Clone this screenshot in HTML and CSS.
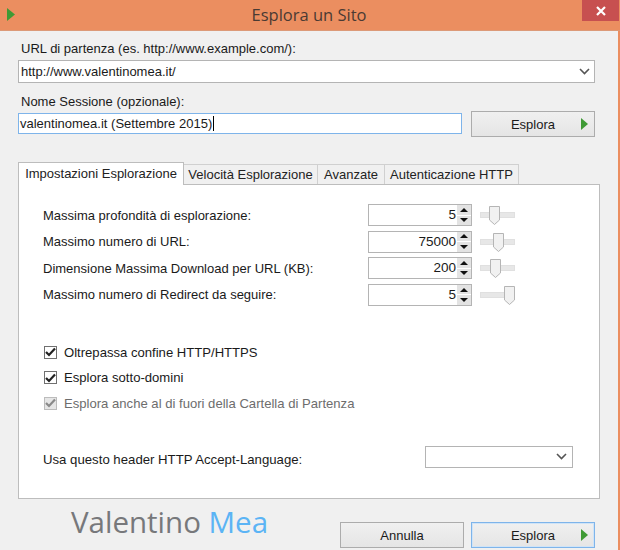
FILE: index.html
```html
<!DOCTYPE html>
<html lang="it">
<head>
    <meta charset="UTF-8">
    <meta name="viewport" content="width=device-width, initial-scale=1.0">
    <title>Esplora un Sito</title>
    <link rel="stylesheet" href="styles.css">
</head>
<body>

<div class="window">
    <header class="titlebar">
        <svg class="app-icon" width="8" height="13" viewBox="0 0 8 13"><path d="M0 0 L8 6.5 L0 13 Z" fill="#3f9a35"/></svg>
        <h1>Esplora un Sito</h1>
        <button class="close-btn">
            <svg width="10" height="10" viewBox="0 0 10 10"><path d="M1 1 L9 9 M9 1 L1 9" stroke="#fff" stroke-width="2.2"/></svg>
        </button>
    </header>

    <main class="client">
        <label class="field-label">URL di partenza (es. http://www.example.com/):</label>
        <div class="combo combo-url">
            <span>http://www.valentinomea.it/</span>
            <svg class="chevron" width="11" height="7" viewBox="0 0 11 7"><path d="M1 1 L5.5 5.5 L10 1" fill="none" stroke="#555" stroke-width="1.6"/></svg>
        </div>

        <label class="field-label session-label">Nome Sessione (opzionale):</label>
        <div class="session-row">
            <div class="text-input">valentinomea.it (Settembre 2015)<span class="caret"></span></div>
            <button class="btn">
                <span>Esplora</span>
                <svg class="btn-arrow" width="7" height="12" viewBox="0 0 7 12"><path d="M0 0 L7 6 L0 12 Z" fill="#3f9a35"/></svg>
            </button>
        </div>

        <div class="tabs">
            <div class="tab tab-active">Impostazioni Esplorazione</div>
            <div class="tab tab-speed">Velocità Esplorazione</div>
            <div class="tab tab-adv">Avanzate</div>
            <div class="tab tab-auth">Autenticazione HTTP</div>
        </div>

        <section class="panel">
            <div class="settings">
                <div class="setting-row">
                    <span>Massima profondità di esplorazione:</span>
                    <div class="spinner"><span class="spin-value">5</span><div class="spin-btns"><i class="up"></i><i class="down"></i></div></div>
                    <div class="slider"><svg class="thumb" style="left: 8px" width="11" height="19" viewBox="0 0 11 19"><path d="M.5.5 H10.5 V14 L5.5 18.5 L.5 14 Z" fill="#f1f1f1" stroke="#b5b5b5"/></svg></div>
                </div>
                <div class="setting-row">
                    <span>Massimo numero di URL:</span>
                    <div class="spinner"><span class="spin-value">75000</span><div class="spin-btns"><i class="up"></i><i class="down"></i></div></div>
                    <div class="slider"><svg class="thumb" style="left: 12px" width="11" height="19" viewBox="0 0 11 19"><path d="M.5.5 H10.5 V14 L5.5 18.5 L.5 14 Z" fill="#f1f1f1" stroke="#b5b5b5"/></svg></div>
                </div>
                <div class="setting-row">
                    <span>Dimensione Massima Download per URL (KB):</span>
                    <div class="spinner"><span class="spin-value">200</span><div class="spin-btns"><i class="up"></i><i class="down"></i></div></div>
                    <div class="slider"><svg class="thumb" style="left: 9px" width="11" height="19" viewBox="0 0 11 19"><path d="M.5.5 H10.5 V14 L5.5 18.5 L.5 14 Z" fill="#f1f1f1" stroke="#b5b5b5"/></svg></div>
                </div>
                <div class="setting-row">
                    <span>Massimo numero di Redirect da seguire:</span>
                    <div class="spinner"><span class="spin-value">5</span><div class="spin-btns"><i class="up"></i><i class="down"></i></div></div>
                    <div class="slider"><svg class="thumb" style="left: 23px" width="11" height="19" viewBox="0 0 11 19"><path d="M.5.5 H10.5 V14 L5.5 18.5 L.5 14 Z" fill="#f1f1f1" stroke="#b5b5b5"/></svg></div>
                </div>
            </div>

            <div class="checks">
                <div class="check">
                    <span class="check-box"><svg width="11" height="10" viewBox="0 0 11 10"><path d="M1 5 L4 8 L10 1.5" fill="none" stroke="#222" stroke-width="2.2"/></svg></span>
                    Oltrepassa confine HTTP/HTTPS
                </div>
                <div class="check">
                    <span class="check-box"><svg width="11" height="10" viewBox="0 0 11 10"><path d="M1 5 L4 8 L10 1.5" fill="none" stroke="#222" stroke-width="2.2"/></svg></span>
                    Esplora sotto-domini
                </div>
                <div class="check check-disabled">
                    <span class="check-box"><svg width="11" height="10" viewBox="0 0 11 10"><path d="M1 5 L4 8 L10 1.5" fill="none" stroke="#8a8a8a" stroke-width="2.2"/></svg></span>
                    Esplora anche al di fuori della Cartella di Partenza
                </div>
            </div>

            <div class="language-row">
                <span>Usa questo header HTTP Accept-Language:</span>
                <div class="combo combo-lang">
                    <svg class="chevron" width="11" height="7" viewBox="0 0 11 7"><path d="M1 1 L5.5 5.5 L10 1" fill="none" stroke="#555" stroke-width="1.6"/></svg>
                </div>
            </div>
        </section>

        <footer class="bottom">
            <div class="logo">Valentino <span class="logo-blue">Mea</span></div>
            <div class="bottom-btns">
                <button class="btn">Annulla</button>
                <button class="btn btn-default">
                    <span>Esplora</span>
                    <svg class="btn-arrow" width="7" height="12" viewBox="0 0 7 12"><path d="M0 0 L7 6 L0 12 Z" fill="#3f9a35"/></svg>
                </button>
            </div>
        </footer>
    </main>
</div>

</body>
</html>
```

FILE: styles.css
```css
* {
    box-sizing: border-box;
}

html, body {
    margin: 0;
    height: 100%;
}

body {
    background-color: #EB8E60;
    font-family: "Liberation Sans", Arial, sans-serif;
    font-size: 13px;
    color: #1a1a1a;
    overflow: hidden;
}

.window {
    width: 620px;
    height: 550px;
    display: flex;
    flex-direction: column;
}

/* Title bar */
.titlebar {
    height: 31px;
    flex-shrink: 0;
    display: grid;
    grid-template-columns: 1fr auto 1fr;
    align-items: start;
    background-color: #EB8E60;
    border-bottom: 1px solid #dc9a78;
}

.app-icon {
    margin: 8px 0 0 7px;
}

.titlebar h1 {
    margin: 5px 2px 0 0;
    font-family: "Open Sans", sans-serif;
    font-size: 16.5px;
    font-weight: 400;
    color: #4a3a33;
    line-height: 20px;
}

.close-btn {
    justify-self: end;
    width: 37px;
    height: 21px;
    margin-right: 1px;
    padding: 0;
    border: none;
    background-color: #C75050;
    display: flex;
    align-items: center;
    justify-content: center;
}

/* Client area */
.client {
    flex: 1;
    padding: 10px 0 0 18px;
    background-color: #F0F0F0;
    display: flex;
    flex-direction: column;
    width: 618px;
}

.field-label {
    display: block;
    height: 19px;
    padding-left: 3px;
    line-height: 16px;
}

.combo {
    background-color: #fff;
    border: 1px solid #b4b4b4;
    display: flex;
    align-items: center;
    justify-content: space-between;
}

.combo-url {
    width: 577px;
    height: 23px;
    padding: 0 4px 0 2px;
}

.session-label {
    margin-top: 11px;
}

.session-row {
    width: 577px;
    display: flex;
    justify-content: space-between;
    align-items: flex-start;
}

.session-row .btn {
    margin-top: -2px;
}

.text-input {
    width: 444px;
    height: 21px;
    padding-left: 1px;
    background-color: #fff;
    border: 1px solid #7eb4ea;
    line-height: 19px;
}

.caret {
    display: inline-block;
    width: 1px;
    height: 15px;
    margin-left: 1px;
    vertical-align: -3px;
    background-color: #000;
}

.btn {
    position: relative;
    width: 124px;
    height: 26px;
    padding: 0;
    font-family: inherit;
    font-size: 13px;
    color: #1a1a1a;
    text-align: center;
    background: linear-gradient(#f0f0f0, #e5e5e5);
    border: 1px solid #acacac;
}

.btn-arrow {
    position: absolute;
    top: 6px;
    right: 6px;
}

.btn-default {
    border-color: #7eb4ea;
    box-shadow: inset 0 0 0 1px #d0e4f7;
}

/* Tabs */
.tabs {
    display: flex;
    align-items: flex-end;
    margin-top: 24px;
    height: 23px;
}

.tab {
    height: 20px;
    line-height: 20px;
    text-align: center;
    background-color: #f0f0f0;
    border: 1px solid #d0d0d0;
    border-bottom: none;
    margin-left: -1px;
    color: #222;
}

.tab-active {
    width: 166px;
    height: 23px;
    line-height: 21px;
    margin-left: 0;
    margin-bottom: -1px;
    position: relative;
    z-index: 1;
    background-color: #fff;
    border-color: #bdbdbd;
}

.tab-speed {
    width: 135px;
}

.tab-adv {
    width: 68px;
}

.tab-auth {
    width: 135px;
}

/* Panel */
.panel {
    width: 582px;
    height: 315px;
    padding: 19px 0 0 24px;
    background-color: #fff;
    border: 1px solid #bdbdbd;
    display: flex;
    flex-direction: column;
}

.settings {
    display: flex;
    flex-direction: column;
    gap: 4.6px;
}

.setting-row {
    display: flex;
    align-items: center;
    height: 22px;
}

.setting-row > span:first-child {
    width: 325px;
}

.spinner {
    width: 104px;
    height: 22px;
    border: 1px solid #b4b4b4;
    display: flex;
    justify-content: flex-end;
    align-items: stretch;
}

.spin-value {
    flex: 1;
    text-align: right;
    font-size: 13.5px;
    line-height: 20px;
    padding-right: 1px;
}

.spin-btns {
    width: 14px;
    display: flex;
    flex-direction: column;
    gap: 1px;
    background-color: #fff;
}

.spin-btns i {
    flex: 1;
    background-color: #e3e3e3;
    display: flex;
    align-items: center;
    justify-content: center;
}

.spin-btns i::after {
    content: "";
    border-left: 4px solid transparent;
    border-right: 4px solid transparent;
}

.spin-btns .up::after {
    border-bottom: 4px solid #111;
}

.spin-btns .down::after {
    border-top: 4px solid #111;
}

.slider {
    position: relative;
    width: 35px;
    height: 6px;
    margin-left: 8px;
    background-color: #e7e7e7;
    border: 1px solid #e0e0e0;
}

.thumb {
    position: absolute;
    top: -7px;
}

/* Checkboxes */
.checks {
    display: flex;
    flex-direction: column;
    gap: 12.5px;
    margin-top: 40px;
    font-size: 13.1px;
}

.check {
    display: flex;
    align-items: center;
    gap: 7px;
    height: 13px;
    padding-left: 1px;
}

.check-box {
    width: 13px;
    height: 13px;
    background-color: #fff;
    border: 1px solid #707070;
    display: flex;
    align-items: center;
    justify-content: center;
}

.check-disabled {
    color: #6d6d6d;
}

.check-disabled .check-box {
    background-color: #e6e6e6;
    border-color: #bcbcbc;
}

.language-row {
    display: flex;
    align-items: flex-start;
    margin-top: 36px;
}

.language-row > span {
    width: 382px;
    padding-top: 6px;
    font-size: 13.2px;
}

.combo-lang {
    width: 148px;
    height: 22px;
    justify-content: flex-end;
    padding-right: 5px;
}

/* Bottom strip */
.bottom {
    display: flex;
    justify-content: space-between;
    width: 577px;
    margin-top: 5px;
}

.logo {
    margin-left: 53px;
    font-family: "Open Sans", sans-serif;
    font-size: 29.5px;
    font-weight: 500;
    line-height: 36px;
    color: #77787b;
}

.logo-blue {
    color: #5bb4f5;
}

.bottom-btns {
    display: flex;
    gap: 7px;
    margin-top: 18px;
}
```
